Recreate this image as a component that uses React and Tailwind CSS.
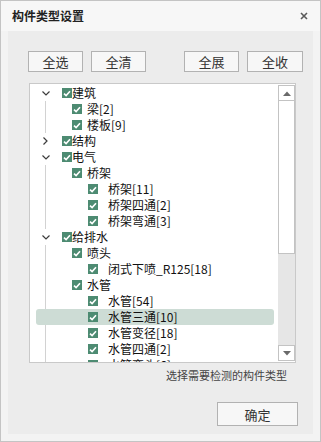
import React from "react";

const font = { fontFamily: '"Noto Sans CJK SC", "Noto Sans", sans-serif' };

// flat list of visible rows: level, label, expand state, whether a guide line runs through
const rows = [
  { level: 0, label: "建筑", open: true },
  { level: 1, label: "梁[2]", line: true },
  { level: 1, label: "楼板[9]", line: true },
  { level: 0, label: "结构", open: false },
  { level: 0, label: "电气", open: true },
  { level: 1, label: "桥架", line: true },
  { level: 2, label: "桥架[11]", line: true },
  { level: 2, label: "桥架四通[2]", line: true },
  { level: 2, label: "桥架弯通[3]", line: true },
  { level: 0, label: "给排水", open: true },
  { level: 1, label: "喷头", line: true },
  { level: 2, label: "闭式下喷_R125[18]", line: true },
  { level: 1, label: "水管", line: true },
  { level: 2, label: "水管[54]", line: true },
  { level: 2, label: "水管三通[10]", line: true, selected: true },
  { level: 2, label: "水管变径[18]", line: true },
  { level: 2, label: "水管四通[2]", line: true },
  { level: 2, label: "水管弯头[6]", line: true },
];

const CheckBox = () => (
  <span className="w-[10px] h-[10px] bg-[#4d8b72] flex items-center justify-center shrink-0">
    <svg width="8" height="7" viewBox="0 0 8 7">
      <path d="M1 3.6 L3.1 5.6 L7 1.3" fill="none" stroke="#fff" strokeWidth="1.6" />
    </svg>
  </span>
);

const Chevron = ({ open }) =>
  open ? (
    <svg width="8" height="5" viewBox="0 0 8 5">
      <path d="M0.5 0.5 L4 4 L7.5 0.5" fill="none" stroke="#3c3c3c" strokeWidth="1.2" />
    </svg>
  ) : (
    <svg width="5" height="8" viewBox="0 0 5 8">
      <path d="M0.5 0.5 L4 4 L0.5 7.5" fill="none" stroke="#3c3c3c" strokeWidth="1.2" />
    </svg>
  );

const TreeRow = ({ row }) => {
  const indent = ["ml-[7px]", "ml-[17px]", "ml-[33px]"][row.level];
  const gap = ["", "ml-[5px]", "ml-[10px]"][row.level];
  return (
    <div
      className={`flex h-4 items-stretch rounded-[3px] ${
        row.selected ? "bg-[#cddcd5]" : ""
      }`}
    >
      <div className="w-[19px] flex items-center justify-center shrink-0">
        {row.level === 0 ? (
          <Chevron open={row.open} />
        ) : row.line && !row.selected ? (
          <span className="w-px h-full bg-[#d2d2d2]" />
        ) : null}
      </div>
      <div className="flex items-center">
        <span className={indent}>
          <CheckBox />
        </span>
        <span className={`${gap} text-[12px] leading-4 text-[#111] whitespace-nowrap`}>
          {row.label}
        </span>
      </div>
    </div>
  );
};

const Btn = ({ children, className = "" }) => (
  <button
    className={`h-[21px] w-[55px] border border-[#b2b2b2] bg-[#f7f7f7] text-[13px] leading-none text-[#333] ${className}`}
  >
    {children}
  </button>
);

const ScrollBtn = ({ up }) => (
  <div className="h-4 border border-[#c3c3c3] bg-white flex items-center justify-center">
    <svg width="8" height="5" viewBox="0 0 8 5">
      <path d={up ? "M0 5 L4 0.5 L8 5 Z" : "M0 0 L4 4.5 L8 0 Z"} fill="#6a6a6a" />
    </svg>
  </div>
);

export default function App() {
  return (
    <div
      className="w-[321px] h-[442px] bg-[#f3f3f3] border border-[#c4c4c4] flex flex-col"
      style={font}
    >
      {/* Title bar */}
      <div className="h-[30px] bg-[#f7f7f7] flex items-center justify-between pl-[11px] pr-[12px] shrink-0">
        <span className="text-[12px] font-bold text-[#222] tracking-[0px]">构件类型设置</span>
        <svg width="8" height="8" viewBox="0 0 8 8">
          <path d="M1 1 L7 7 M7 1 L1 7" stroke="#5a5a5a" strokeWidth="1.6" />
        </svg>
      </div>

      {/* Body */}
      <div className="flex-1 mx-[7px] mb-[7px] bg-[#ececec] flex flex-col">
        {/* Buttons */}
        <div className="mt-[20px] pl-[20px] pr-[10px] flex justify-between">
          <div className="flex gap-2">
            <Btn>全选</Btn>
            <Btn>全清</Btn>
          </div>
          <div className="flex gap-2">
            <Btn>全展</Btn>
            <Btn className="w-[56px]">全收</Btn>
          </div>
        </div>

        {/* Tree */}
        <div className="mt-[11px] ml-[21px] w-[267px] h-[280px] border border-[#c9c9c9] bg-white flex">
          <div className="flex-1 overflow-hidden pl-[6px] pr-[4px] pt-[1px]">
            {rows.map((row, i) => (
              <TreeRow key={i} row={row} />
            ))}
          </div>
          <div className="w-[17px] my-px flex flex-col bg-[#e6e6e6]">
            <ScrollBtn up />
            <div className="h-[153px] border border-t-0 border-[#c3c3c3] bg-white" />
            <div className="flex-1" />
            <ScrollBtn />
          </div>
        </div>

        {/* Hint */}
        <div className="mt-[6px] pr-[26px] text-right text-[11px] leading-[13px] text-[#444]">
          选择需要检测的构件类型
        </div>

        {/* OK */}
        <div className="mt-[20px] pr-[15px] flex justify-end">
          <button className="w-[81px] h-[24px] border border-[#b2b2b2] bg-[#f7f7f7] text-[13px] leading-none text-[#333]">
            确定
          </button>
        </div>
      </div>
    </div>
  );
}
